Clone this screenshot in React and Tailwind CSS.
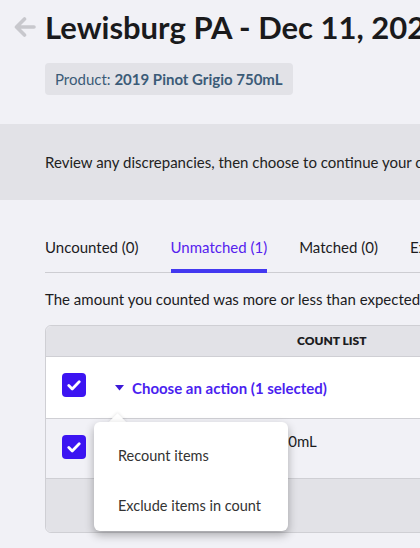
const TABS = [
  { label: 'Uncounted (0)' },
  { label: 'Unmatched (1)', active: true },
  { label: 'Matched (0)' },
  { label: 'Excluded (0)' },
]

function BackArrow() {
  return (
    <svg width="22" height="20" viewBox="0 0 22 20" fill="none" className="mr-[9px]">
      <path d="M20 10H3M10.5 2 2.5 10l8 8" stroke="#c8c8cd" strokeWidth="3.6" strokeLinecap="round" strokeLinejoin="round" />
    </svg>
  )
}

function Checkbox() {
  return (
    <span className="w-6 h-6 rounded-[4px] bg-[#3c14f2] flex items-center justify-center">
      <svg width="14" height="11" viewBox="0 0 14 11" fill="none">
        <path d="M1.8 5.6 5.2 9 12.2 1.8" stroke="white" strokeWidth="2.8" strokeLinecap="round" strokeLinejoin="round" />
      </svg>
    </span>
  )
}

function ActionMenu() {
  return (
    <div className="absolute left-[48px] top-[65px] w-[194px] z-10">
      <div className="absolute -top-[6px] left-[17px] w-[13px] h-[13px] bg-white rotate-45 shadow-[-1px_-1px_3px_rgba(0,0,0,0.08)]" />
      <div className="relative bg-white rounded-md shadow-[0_4px_10px_rgba(0,0,0,0.3)] pt-[9px]">
        <div className="px-6 py-[15px] leading-[20px] text-[14.5px] whitespace-nowrap text-[#333]">Recount items</div>
        <div className="px-6 py-[15px] leading-[20px] text-[14.5px] whitespace-nowrap text-[#333]">Exclude items in count</div>
      </div>
    </div>
  )
}

export default function App() {
  return (
    <div className="w-[420px] h-[548px] overflow-hidden bg-[#f1f1f6] font-['Lato','Liberation_Sans',sans-serif] text-[#1c1c1e]">
      <div className="w-[900px]">
        <header className="pt-[6px] pl-[14px]">
          <div className="flex items-center">
            <BackArrow />
            <h1 className="text-[31px] font-bold leading-[42px] text-[#1a1a1c]">Lewisburg PA - Dec 11, 2020</h1>
          </div>
          <div className="ml-[31px] mt-[15px] inline-flex items-center h-8 px-[10px] rounded bg-[#e2e2e7] text-[15px] text-[#3b5b77]">
            Product:&nbsp;<span className="font-bold">2019 Pinot Grigio 750mL</span>
          </div>
        </header>

        <div className="mt-[29px] h-[76px] bg-[#e2e2e7] flex items-center pl-[45px] text-[15px] text-[#222]">
          Review any discrepancies, then choose to continue your count or finish the count.
        </div>

        <div className="pl-[45px]">
          <nav className="mt-[37px] flex gap-8 border-b border-[#cdcdd2]">
            {TABS.map(tab => (
              <div
                key={tab.label}
                className={`pb-[12px] text-[15px] leading-[20px] border-b-[4px] -mb-px ${tab.active ? 'border-[#4338f0] text-[#5622ee]' : 'border-transparent text-[#1c1c1e]'}`}
              >
                {tab.label}
              </div>
            ))}
          </nav>

          <p className="mt-[16px] text-[15px] leading-[20px] text-[#1c1c1e]">
            The amount you counted was more or less than expected. Try recounting these items.
          </p>

          <div className="mt-[16px] w-[640px] border border-[#cfcfd4] rounded-l-md">
            <div className="h-[31px] bg-[#e2e2e7] rounded-tl-md flex items-center pl-[251px] border-b border-[#cfcfd4]">
              <span className="text-[12px] font-extrabold text-[#1c1c1e]">COUNT LIST</span>
            </div>

            <div className="relative h-[62px] bg-white border-b border-[#cfcfd4] flex items-start pt-[16px] pl-[16px]">
              <Checkbox />
              <button className="ml-[29px] mt-[5px] flex items-center gap-[8px] text-[15px] leading-[20px] font-bold text-[#4b1ff0]">
                <svg width="9" height="6" viewBox="0 0 9 6">
                  <path d="M0 0h9L4.5 5.5z" fill="#3d1ad8" />
                </svg>
                Choose an action (1 selected)
              </button>
              <ActionMenu />
            </div>

            <div className="h-[60px] border-b border-[#cfcfd4] flex items-start pt-[16px] pl-[16px]">
              <Checkbox />
              <span className="ml-[64px] -mt-[4px] text-[15px] leading-[20px] text-[#1c1c1e]">2019 Pinot Grigio 750mL</span>
            </div>

            <div className="h-[53px] bg-[#e2e2e7] rounded-bl-md" />
          </div>
        </div>
      </div>
    </div>
  )
}
